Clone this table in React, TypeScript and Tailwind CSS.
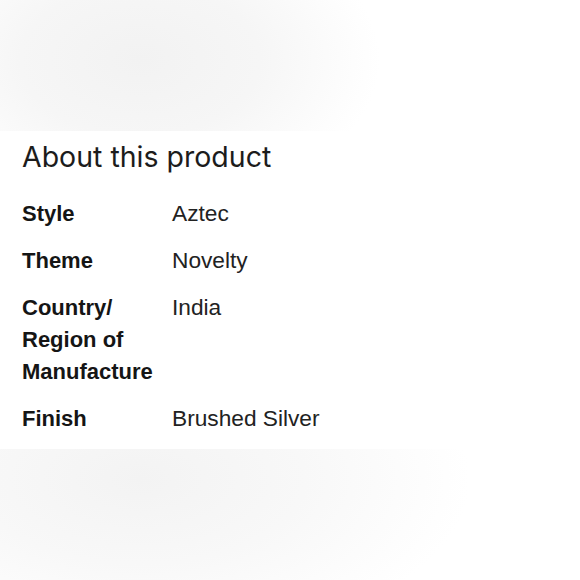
import React from "react";

type Spec = {
  label: string;
  value: string;
};

const specs: Spec[] = [
  { label: "Style", value: "Aztec" },
  { label: "Theme", value: "Novelty" },
  { label: "Country/ Region of Manufacture", value: "India" },
  { label: "Finish", value: "Brushed Silver" },
];

export default function App() {
  return (
    <div className="w-[580px] h-[580px] flex flex-col bg-white overflow-hidden">
      {/* blurred photo strip above */}
      <div className="h-[131px] bg-[radial-gradient(ellipse_240px_150px_at_140px_60px,#f2f2f2_0%,#f6f6f6_50%,#ffffff_100%)]" />

      {/* About this product */}
      <div className="bg-white px-[22px] pt-[10px] pb-[14px]">
        <h2 className="font-['Inter',sans-serif] text-[28.5px] leading-[32px] text-[#1c1c1c]">
          About this product
        </h2>

        <dl className="mt-[25px] flex flex-col gap-[15px] font-['Liberation_Sans',Arial,sans-serif] text-[22px] leading-[32px]">
          {specs.map((spec) => (
            <div key={spec.label} className="flex">
              <dt className="w-[150px] shrink-0 pr-2 font-bold text-[#151515]">
                {spec.label}
              </dt>
              <dd className="text-[22.7px] leading-[31px] text-[#222222]">{spec.value}</dd>
            </div>
          ))}
        </dl>
      </div>

      {/* blurred photo strip below */}
      <div className="flex-1 bg-[radial-gradient(ellipse_330px_170px_at_140px_30px,#f3f3f3_0%,#f8f8f8_50%,#ffffff_100%)]" />
    </div>
  );
}
